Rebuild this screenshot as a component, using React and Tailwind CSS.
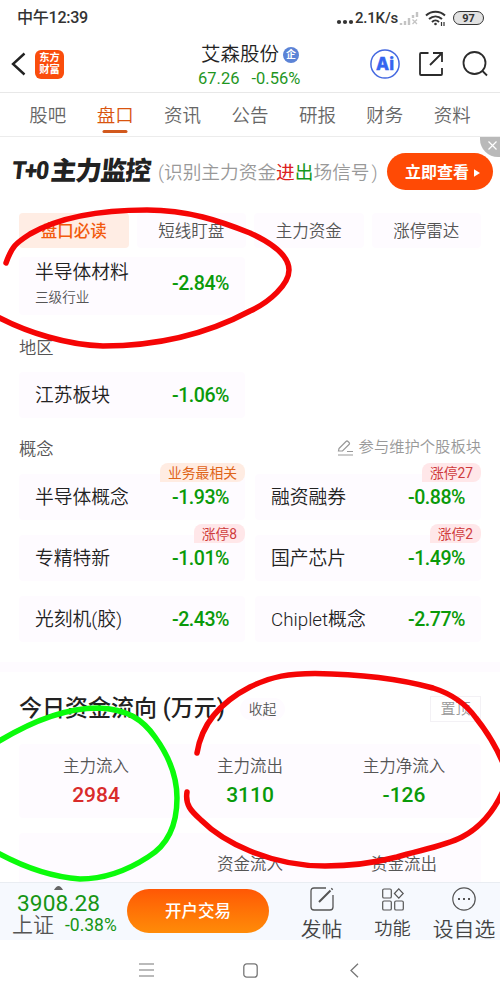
import React, { useState } from "react";

const tabs = ["股吧", "盘口", "资讯", "公告", "研报", "财务", "资料"];
const subTabs = ["盘口必读", "短线盯盘", "主力资金", "涨停雷达"];

const concepts = [
    { name: "半导体概念", change: "-1.93%", tag: "业务最相关", hot: true },
    { name: "融资融券", change: "-0.88%", tag: "涨停27" },
    { name: "专精特新", change: "-1.01%", tag: "涨停8" },
    { name: "国产芯片", change: "-1.49%", tag: "涨停2" },
    { name: "光刻机(胶)", change: "-2.43%" },
    { name: "Chiplet概念", change: "-2.77%" },
];

const flows = [
    { label: "主力流入", value: "2984", color: "text-[#d92b2b]" },
    { label: "主力流出", value: "3110", color: "text-[#0a9a0a]" },
    { label: "主力净流入", value: "-126", color: "text-[#0a9a0a]" },
];

const StatusBar = () => (
    <div className="h-9 flex items-center justify-between pl-[17px] pr-4 text-[#333]">
        <span className="text-[16.1px] font-medium leading-none pt-px tracking-[-0.3px]">中午12:39</span>
        <div className="flex items-center">
            <svg width="18" height="6" viewBox="0 0 18 6" fill="#333" className="mt-[7px]">
                <circle cx="3" cy="3" r="2.1" />
                <circle cx="9" cy="3" r="2.1" />
                <circle cx="15" cy="3" r="2.1" />
            </svg>
            <span className="text-[15px] font-medium leading-none ml-px pt-px w-[42px] tracking-[-0.2px] whitespace-nowrap">2.1K/s</span>
            <svg width="20" height="14" viewBox="0 0 20 14" stroke="#c4c4c4" strokeWidth="2.4" className="ml-0.5">
                <path d="M2 14v-2M6 14v-4M10 14V7M14 7V4M18 6V1" />
                <path d="M13.5 8.5l4.5 4.5M18 8.5L13.5 13" strokeWidth="1.3" />
            </svg>
            <svg width="22" height="17" viewBox="0 0 22 17" fill="none" stroke="#333" strokeWidth="2" className="ml-1.5">
                <path d="M1 5.5C6.5 .5 14.5 .5 20 5.5M4 9c4-3.5 9-3.5 13 0M7 12c2-2 5-2 7 0" />
                <circle cx="10.5" cy="14" r="1.3" fill="#333" stroke="none" />
                <path d="M16.5 12v4M19 12v4" strokeWidth="1.2" />
            </svg>
            <div className="ml-1.5 w-[31px] h-[14px] rounded-full border-[1.5px] border-[#333] bg-[#e2e2e2] text-[11px] font-bold flex items-center justify-center leading-none">97</div>
        </div>
    </div>
);

const Header = () => (
    <div className="h-[57px] flex items-center border-b border-[#e8e8e8] px-[11px]">
        <svg width="15" height="24" viewBox="0 0 15 24" fill="none" stroke="#222" strokeWidth="2.4">
            <path d="M13.5 1.5L2 12l11.5 10.5" />
        </svg>
        <div className="ml-[9px] w-[29px] h-[29px] rounded-[6px] bg-[#fa4d0c] text-white text-[10.3px] leading-[12px] font-bold flex flex-col items-center justify-center">
            <span>东方</span>
            <span>财富</span>
        </div>
        <div className="flex-1 pl-[134px]">
            <div className="flex items-center h-[26px] mt-[3px] pl-[3px]">
                <span className="text-[19.5px] font-[350] text-[#222] whitespace-nowrap">艾森股份</span>
                <span className="ml-[4px] w-4 h-4 rounded-full bg-[#5b83d6] text-white text-[10px] font-bold flex items-center justify-center leading-none">企</span>
            </div>
            <div className="text-[#1f961f] text-[16.5px] leading-[22px] flex gap-3">
                <span>67.26</span>
                <span>-0.56%</span>
            </div>
        </div>
        <div className="flex items-center shrink-0">
            <svg width="30" height="30" viewBox="0 0 30 30">
                <circle cx="15" cy="15" r="14.1" fill="none" stroke="#4468e0" strokeWidth="1.5" />
                <text x="15" y="20.5" textAnchor="middle" fontFamily="Inter" fontSize="17" fontWeight="800" fill="#3565f0" stroke="#3565f0" strokeWidth=".4">Ai</text>
            </svg>
            <svg width="26" height="26" viewBox="0 0 26 26" fill="none" stroke="#2b2b2b" strokeWidth="1.8" className="ml-[18px]">
                <path d="M10.5 2H3Q2 2 2 3v20q0 1 1 1h20q1 0 1-1v-6M15 2h9v9M24 2L12 14" />
            </svg>
            <svg width="27" height="26" viewBox="0 0 27 26" fill="none" stroke="#2b2b2b" strokeWidth="1.8" className="ml-[18px]">
                <circle cx="12.5" cy="12" r="11" />
                <path d="M20 19.5l5 5" />
            </svg>
        </div>
    </div>
);

const Banner = () => (
    <div className="relative h-[76px] flex items-start pl-[10px] pr-[7px]">
        <span className="mt-[18px] h-8 w-[143px] pl-[2px] flex items-center text-[26px] font-black -skew-x-6 tracking-[-1.2px] text-[#222] whitespace-nowrap">
            <span className="w-[39px] shrink-0 text-[25px]">
                <span className="inline-block scale-x-90 origin-left">T+0</span>
            </span>
            主力监控
        </span>
        <span className="mt-[20px] ml-[5px] h-8 flex items-center text-[18.7px] font-[350] text-[#999] whitespace-nowrap">
            <span>(</span>识别主力资金
            <b className="font-normal text-[#dc2020]">进</b>
            <b className="font-normal text-[#15981b]">出</b>
            场信号<span className="ml-[2px]">)</span>
        </span>
        <button className="ml-auto mt-4 w-[106px] h-[37px] shrink-0 rounded-full bg-[#ff4a05] text-white text-[16px] font-bold flex items-center justify-center gap-[5px] pl-[5px] pt-[2px]">
            立即查看
            <svg width="6" height="8" viewBox="0 0 7 9" fill="#fff"><path d="M0 0l7 4.5L0 9z" /></svg>
        </button>
        <div className="absolute right-0 top-0 w-5 h-5 rounded-bl-[18px] bg-[#b9b9b9] flex items-center justify-center">
            <svg width="9" height="9" viewBox="0 0 9 9" stroke="#fff" strokeWidth="1.2" className="ml-1 -mt-1"><path d="M.5 .5l8 8M8.5 .5l-8 8" /></svg>
        </div>
    </div>
);

const SectorCard = ({ item }) => (
    <div className="relative h-[46px] bg-[#fefbff] rounded-sm flex items-center justify-between pl-4 pr-4 pt-[2px]">
        <span className="text-[18.8px] font-[350] text-[#222]">{item.name}</span>
        <span className="text-[19.6px] font-medium text-[#0a9a0a] tracking-[-0.5px]">{item.change}</span>
        {item.tag && (
            <span className={`absolute right-0 -top-[11px] h-[19px] px-2 pt-px rounded-tl-[8px] rounded-r-[8px] text-[13.8px] font-normal flex items-center whitespace-nowrap ${item.hot ? "bg-[#ffece2] text-[#df6419]" : "bg-[#ffe7e9] text-[#cf3b3b]"}`}>
                {item.tag}
            </span>
        )}
    </div>
);

const BottomBar = () => (
    <div className="h-[58px] shrink-0 bg-[#f6f9fe] border-t border-[#e9edf2] flex">
        <div className="w-[127px] relative pl-[17px] pt-[11px]">
            <svg width="9" height="4" viewBox="0 0 9 4" className="absolute left-[54px] top-[3px]" fill="#666"><path d="M0 4q4.5-8 9 0z" /></svg>
            <div className="text-[22.7px] leading-[20px] text-[#159515] tracking-[0.1px]">3908.28</div>
            <div className="flex items-center -ml-[5px] h-[21px] mt-px">
                <span className="text-[21px] font-[350] text-[#555] leading-[21px]">上证</span>
                <span className="ml-[11px] text-[17.5px] text-[#159515] leading-none">-0.38%</span>
            </div>
        </div>
        <button className="mt-[6px] w-[142px] h-11 pt-[2px] rounded-full bg-linear-to-b from-[#ff5705] to-[#ff8b08] text-white text-[16.5px] font-medium">开户交易</button>
        <div className="w-[105px] flex flex-col items-center pt-[4px]">
            <svg width="24" height="24" viewBox="0 0 24 24" fill="none" stroke="#555" strokeWidth="1.3" className="shrink-0">
                <path d="M16 1H4Q1 1 1 4v16q0 3 3 3h16q3 0 3-3V8" />
                <path d="M9 15L20.5 3.5M21.5 2.5l1-1" strokeWidth="2" />
            </svg>
            <span className="text-[20.8px] font-[350] leading-[24px] mt-[7px] text-[#444]">发帖</span>
        </div>
        <div className="w-[37px] flex flex-col items-center pt-[5px]">
            <svg width="22" height="23" viewBox="0 0 22 23" fill="none" stroke="#555" strokeWidth="1.2" className="shrink-0">
                <rect x=".7" y="1" width="8.6" height="9" rx="1.3" />
                <rect x=".7" y="13" width="8.6" height="9" rx="1.3" />
                <rect x="12.7" y="13" width="8.6" height="9" rx="1.3" />
                <path d="M16.8 .8l4.4 4.7-4.4 4.7-4.4-4.7z" />
            </svg>
            <span className="text-[18.2px] font-[350] leading-[24px] mt-[6px] text-[#444] whitespace-nowrap">功能</span>
        </div>
        <div className="flex-1 flex flex-col items-center pt-[4px] pl-[17px]">
            <svg width="24" height="24" viewBox="0 0 24 24" fill="none" stroke="#555" strokeWidth="1.2" className="shrink-0">
                <circle cx="12" cy="12" r="11.2" />
                <path d="M6 12h2M11 12h2M16 12h2" strokeWidth="2" />
            </svg>
            <span className="text-[20.8px] font-[350] leading-[24px] mt-[7px] text-[#444] whitespace-nowrap">设自选</span>
        </div>
    </div>
);

// Freehand marks drawn over the page
const Marks = () => (
    <svg width="500" height="1000" viewBox="0 0 500 1000" fill="none" strokeWidth="5.5" strokeLinecap="round" className="absolute left-0 top-0 pointer-events-none">
        <path stroke="#f50505" d="M6 263C12 246 16 243 30 234C65 214 110 210 147 210C188 210 220 221 250 233C276 245 289 258 289 270C289 284 270 302 250 311C205 335 155 346 103 346C68 345 28 333 -4 316" />
        <path stroke="#0bfb0b" d="M-4 743C30 722 65 708 98 708C128 709 143 720 155 737C171 759 177 780 177 798C177 824 168 845 148 857C128 870 105 879 80 879C52 877 25 868 -4 852" />
        <path stroke="#f50505" d="M197 753C201 728 217 704 250 687C272 676 290 673.5 315 673.5C355 674 400 679 433 688C452 694 466 704 476 718C488 733 497 749 503 763" />
        <path stroke="#f50505" d="M503 791C494 811 481 827 462 837C445 846 420 850 397 857C370 864 350 866 325 866C298 866 272 860 250 851C228 842 213 832 201 820C191 811 185 805 187 792" />
    </svg>
);

const App = () => {
    const [tab, setTab] = useState("盘口");
    const [subTab, setSubTab] = useState("盘口必读");

    return (
        <div className="relative w-[500px] h-[1000px] overflow-hidden bg-white flex flex-col font-['Roboto','Noto_Sans_CJK_SC',sans-serif]">
            <StatusBar />
            <Header />
            <div className="h-11 shrink-0 flex border-b border-[#ececec] px-[14px]">
                {tabs.map((t) => (
                    <button key={t} onClick={() => setTab(t)} className={`relative flex-1 pt-[4px] text-[18.5px] font-[350] ${t === tab ? "text-[#d9540f]" : "text-[#666]"}`}>
                        {t}
                        {t === tab && <span className="absolute left-1/2 -translate-x-1/2 bottom-[3px] w-[25px] h-[3px] rounded-full bg-[#d2591d]" />}
                    </button>
                ))}
            </div>

            <div className="flex-1 min-h-0 overflow-hidden">
                <Banner />
                <div className="grid grid-cols-4 gap-2 px-[19px]">
                    {subTabs.map((t) => (
                        <button key={t} onClick={() => setSubTab(t)} className={`h-[35px] pt-[3px] rounded-sm text-[16.5px] ${t === subTab ? "bg-[#ffede4] text-[#f25a0d] font-medium" : "bg-[#fefbff] text-[#555] font-[350]"}`}>
                            {t}
                        </button>
                    ))}
                </div>

                <div className="mt-[9px] ml-[19px] w-[226px] h-[58px] bg-[#fefbff] rounded-sm flex items-center justify-between pl-4 pr-4">
                    <div className="-mt-1">
                        <div className="text-[18.8px] leading-[26px] font-[350] text-[#222]">半导体材料</div>
                        <div className="text-[13.6px] leading-[22px] font-[350] text-[#555]">三级行业</div>
                    </div>
                    <span className="text-[19.6px] font-medium text-[#0a9a0a] tracking-[-0.5px] -mt-1">-2.84%</span>
                </div>

                <div className="mt-[21px] ml-[19px] h-6 leading-6 text-[17.3px] font-[350] text-[#555]">地区</div>
                <div className="mt-[12px] ml-[19px] w-[226px]">
                    <SectorCard item={{ name: "江苏板块", change: "-1.06%" }} />
                </div>

                <div className="mt-[19px] h-6 px-[19px] flex items-center justify-between">
                    <span className="text-[17.3px] font-[350] text-[#555] pt-px">概念</span>
                    <span className="flex items-center text-[15.3px] font-[350] text-[#999] -mt-[3px]">
                        <svg width="17" height="16" viewBox="0 0 17 16" fill="none" stroke="#999" strokeWidth="1.2" className="mr-[5px]">
                            <path d="M2 8.5L9 1.5q1-1 2 0l1 1q1 1 0 2L5.5 11H1.5zM1 15h15M10 11.5h6" />
                        </svg>
                        参与维护个股板块
                    </span>
                </div>
                <div className="mt-[13px] px-[19px] grid grid-cols-2 gap-x-[10px] gap-y-[15px]">
                    {concepts.map((c) => <SectorCard key={c.name} item={c} />)}
                </div>

                <div className="mt-[20px] h-[10px] bg-[#fefbff]" />

                <div className="mt-[24px] px-[19px] h-[26px] flex items-center">
                    <span className="text-[23px] font-medium text-[#222] whitespace-nowrap pt-px">今日资金流向 (万元)</span>
                    <span className="ml-[15px] h-[22px] px-[9px] rounded-full bg-[#fefbff] text-[13.8px] font-[350] text-[#555] flex items-center">收起</span>
                    <span className="ml-auto w-[51px] h-[26px] border border-[#f3f1f5] text-[15px] font-[350] text-[#999] flex items-center justify-center">置顶</span>
                </div>
                <div className="mt-[22px] mx-[19px] h-[74px] bg-[#fefbff] rounded-sm grid grid-cols-3 pt-[11px] text-center">
                    {flows.map((f) => (
                        <div key={f.label}>
                            <div className="text-[16.5px] leading-6 font-[350] text-[#555]">{f.label}</div>
                            <div className={`text-[21px] leading-8 font-medium ${f.color}`}>{f.value}</div>
                        </div>
                    ))}
                </div>
                <div className="mt-[15px] mx-[19px] h-[74px] bg-[#fefbff] rounded-sm grid grid-cols-3 pt-5 text-center text-[16.5px] leading-6 font-[350] text-[#555]">
                    <div />
                    <div>资金流入</div>
                    <div>资金流出</div>
                </div>
            </div>

            <BottomBar />
            <div className="h-[60px] shrink-0 bg-white flex items-center justify-center gap-[89px]">
                <svg width="15" height="14" viewBox="0 0 15 14" stroke="#777" strokeWidth="1.2"><path d="M0 1h15M0 7h15M0 13h15" /></svg>
                <svg width="15" height="15" viewBox="0 0 15 15" fill="none" stroke="#777" strokeWidth="1.3"><rect x=".8" y=".8" width="13.4" height="13.4" rx="3" /></svg>
                <svg width="15" height="15" viewBox="0 0 15 15" fill="none" stroke="#777" strokeWidth="1.3"><path d="M11 .8L4 7.5l7 6.7" /></svg>
            </div>
            <Marks />
        </div>
    );
};

export default App;
